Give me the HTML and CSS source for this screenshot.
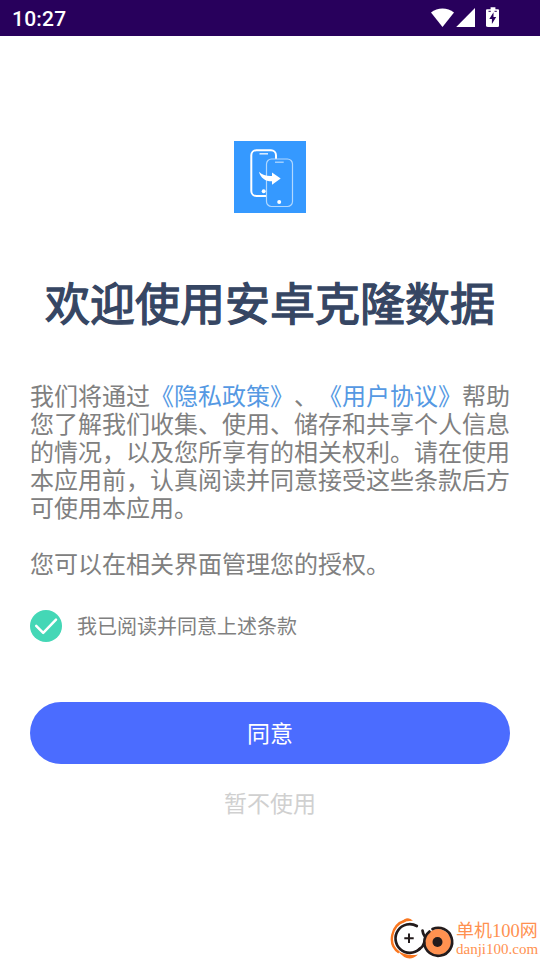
FILE: index.html
```html
<!DOCTYPE html>
<html lang="zh-CN">
<head>
<meta charset="utf-8">
<title>欢迎使用安卓克隆数据</title>
<link rel="stylesheet" href="styles.css">
</head>
<body>
<div class="screen">
  <header class="status">
    <span class="time">10:27</span>
    <svg class="status-icons" width="70" height="24" viewBox="0 0 70 24">
      <path d="M0 5.400C6.500 .2 16.500 .2 23 5.400L11.500 20Z" fill="#fff"/>
      <path d="M44 1V20H25.200Z" fill="#fff"/>
      <path d="M57 2.200h2.600V.2h4.800v2h2.600q1 0 1 1V18.700q0 1.300-1.300 1.300h-9.400Q55 20 55 18.700V3.200q0-1 1-1z" fill="#fff"/>
      <path d="M57.500 4.300h2.300M63.500 4.300h2.300" stroke="#28005c" stroke-width="1"/>
      <path d="M62.500 5.200l-4.200 6.900h2.600v5l4.300-7h-2.700z" fill="#28005c"/>
    </svg>
  </header>
  <main class="welcome">
    <svg class="app-logo" width="72" height="72" viewBox="0 0 72 72">
      <rect width="72" height="72" fill="#3599ff"/>
      <rect x="17.300" y="9.200" width="24.700" height="45.800" rx="5" fill="none" stroke="#fff" stroke-width="2"/>
      <path d="M25.500 12.800h8.500" stroke="#fff" stroke-width="1.500" opacity=".85"/>
      <circle cx="29.700" cy="50.300" r="2" fill="#fff"/>
      <rect x="32.500" y="18" width="26" height="47.500" rx="5" fill="#3599ff" stroke="#b1d8ff" stroke-width="1.200"/>
      <path d="M41 21.200h8.700" stroke="#b1d8ff" stroke-width="1.300"/>
      <circle cx="45.200" cy="61" r="2" fill="#fff"/>
      <path d="M25 30.700c3.300 3.200 7.500 4.600 13 4.300v-3.500l8.700 6.100L38 43.800v-3.500C31.500 40.500 26.500 37 25 30.700z" fill="#fff"/>
    </svg>
    <h1 class="title">欢迎使用安卓克隆数据</h1>
    <div class="terms">
      <p>我们将通过<a>《隐私政策》</a>、<a>《用户协议》</a>帮助<br>您了解我们收集、使用、储存和共享个人信息<br>的情况，以及您所享有的相关权利。请在使用<br>本应用前，认真阅读并同意接受这些条款后方<br>可使用本应用。</p>
      <p>您可以在相关界面管理您的授权。</p>
    </div>
    <div class="consent">
      <svg width="32" height="32" viewBox="0 0 32 32">
        <circle cx="16" cy="16" r="16" fill="#44d7b6"/>
        <path d="M6.200 15.800l7 7L26 9.700" fill="none" stroke="#fff" stroke-width="2.500" stroke-linecap="round" stroke-linejoin="round"/>
      </svg>
      <span>我已阅读并同意上述条款</span>
    </div>
    <button class="agree">同意</button>
    <button class="decline">暂不使用</button>
  </main>
  <footer class="site-mark">
    <svg width="65" height="44" viewBox="0 0 65 44">
      <path d="M15.500 4.500C1 9-3 28 9 36.500" fill="none" stroke="#f9761f" stroke-width="2.400"/>
      <path d="M9.500 8Q17-1.500 23 4.800Q16 4.500 9.500 8zM8 35q9 5.500 20 3.500Q18 48 8 35z" fill="#f9761f"/>
      <circle cx="48" cy="26" r="13" fill="#ff9150"/>
      <g fill="none" stroke="#231b1c" stroke-width="2.700" stroke-linecap="round">
        <path d="M26.800 10A14.300 14.300 0 1 0 29.500 33"/>
        <path d="M42.500 13A14 14 0 1 1 34.200 27Q34 20 39.500 15.500"/>
        <path d="M32.500 14.500Q33 18 34.500 20M34.200 27Q33 31 29.500 33"/>
      </g>
      <circle cx="47.500" cy="26" r="5" fill="#231b1c"/>
      <path d="M19 17.500v9.500M14.300 22.200h9.400" stroke="#231b1c" stroke-width="2"/>
    </svg>
    <div class="site-text"><span class="site-name">单机<span class="digits">100</span>网</span><span class="site-url">danji100.com</span></div>
  </footer>
</div>
</body>
</html>
```
FILE: styles.css
```css
* { box-sizing: border-box; }
body { margin: 0; background: #fff; font-family: "Noto Sans CJK SC", sans-serif; text-spacing-trim: space-all; }
svg { display: block; flex: none; }
.screen { width: 540px; height: 960px; display: flex; flex-direction: column; overflow: hidden; }
.status { height: 36px; flex: none; background: #28005c; display: flex; justify-content: space-between; align-items: flex-start; padding: 7px 39px 0 12px; }
.time { color: #fff; font: 500 21px/24px Roboto, sans-serif; letter-spacing: .2px; }
.welcome { flex: 1; display: flex; flex-direction: column; align-items: center; padding: 105px 30px 0; }
.title { margin: 58px 0 0; font-size: 45px; line-height: 62px; font-weight: 400; -webkit-text-stroke: 1.3px #364663; color: #364663; white-space: nowrap; }
.terms { width: 480px; margin-top: 48px; font-size: 24px; line-height: 28px; color: #808080; white-space: nowrap; }
.terms p { margin: 0 0 28px; }
.terms a { color: #5599e3; }
.consent { width: 480px; height: 32px; margin-top: 5px; display: flex; align-items: center; gap: 15px; font-size: 20px; line-height: 32px; color: #808080; }
button { border: 0; padding: 0; font-family: inherit; font-size: 23px; }
.agree { width: 480px; height: 62px; flex: none; margin-top: 60px; padding-bottom: 2px; border-radius: 31px; background: #4b6cff; color: #fff; }
.decline { margin-top: 20px; height: 36px; background: none; color: #d0d0d0; }
.site-mark { height: 44px; flex: none; display: flex; padding-left: 390px; }
.site-text { display: flex; flex-direction: column; margin-left: 1px; color: #ff9150; white-space: nowrap; }
.site-name { font: 18px/26px "Noto Sans CJK SC", serif; }
.digits { font: 18.500px/24px "Liberation Serif", serif; }
.site-url { font: 15px/15px "Liberation Serif", serif; margin-top: -1px; }
```
